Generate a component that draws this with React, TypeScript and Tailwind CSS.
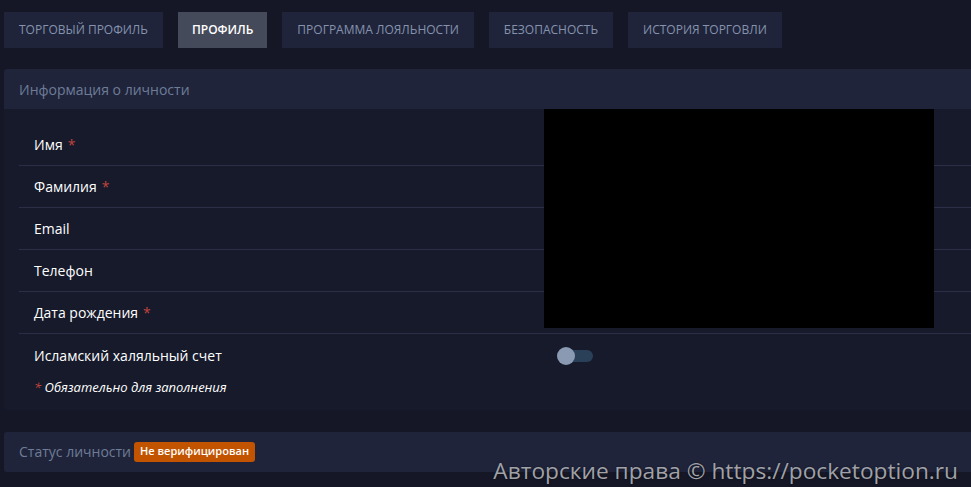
import { useState } from 'react'

const tabs = ['Торговый профиль', 'Профиль', 'Программа лояльности', 'Безопасность', 'История торговли']

const fields = [
  { label: 'Имя', required: true },
  { label: 'Фамилия', required: true },
  { label: 'Email', required: false },
  { label: 'Телефон', required: false },
  { label: 'Дата рождения', required: true },
]

export default function App() {
  const [active, setActive] = useState(1)
  const [halal, setHalal] = useState(false)

  return (
    <div
      className="relative min-h-[487px] bg-[#151726] overflow-hidden pl-1 pt-3"
      style={{ fontFamily: '"Open Sans", "Noto Sans", sans-serif' }}
    >
      {/* вкладки */}
      <div className="flex gap-[15px]">
        {tabs.map((t, i) => (
          <button
            key={t}
            onClick={() => setActive(i)}
            className={`h-9 text-[12px] uppercase ${
              i === active ? 'px-[14px] bg-[#454a5a] text-white font-semibold' : 'px-[15px] bg-[#1f243b] text-[#8593ad]'
            }`}
          >
            {t}
          </button>
        ))}
      </div>

      {/* Информация о личности */}
      <div className="relative mt-[21px] -mr-2 rounded-[3px] bg-[#161a2a] overflow-hidden">
        <div className="h-10 bg-[#1f243b] flex items-center px-[15px] text-[14px] text-[#6e7d97]">
          Информация о личности
        </div>
        <div className="pl-[15px] pt-[15px] pb-[12px]">
          {fields.map((f) => (
            <div key={f.label} className="h-[42px] border-b border-[#2a2e47] flex items-center pl-[15px] text-[14px] text-white">
              {f.label}
              {f.required && <span className="text-[#c0443f] ml-[5px]">*</span>}
            </div>
          ))}
          <div className="h-[43px] flex items-center pl-[15px] text-[14px] text-white">
            <div className="w-[523px]">Исламский халяльный счет</div>
            <button onClick={() => setHalal(!halal)} className="relative w-9 h-[18px] flex items-center">
              <span className={`absolute left-2 right-0 h-3 rounded-full ${halal ? 'bg-[#2f6f9f]' : 'bg-[#2a4058]'}`} />
              <span className={`absolute w-[18px] h-[18px] rounded-full bg-[#8a9ab3] ${halal ? 'left-[18px]' : 'left-0'}`} />
            </button>
          </div>
          <div className="pl-[15px] mt-[1px] text-[13px] italic text-white">
            <span className="text-[#c0443f]">*</span> Обязательно для заполнения
          </div>
        </div>
        {/* скрыто */}
        <div className="absolute left-[540px] top-10 w-[390px] h-[219px] bg-black" />
      </div>

      {/* Статус личности */}
      <div className="mt-[22px] -mr-2 h-10 rounded-[3px] bg-[#1f243b] flex items-center px-[15px] text-[14px] text-[#6e7d97]">
        Статус личности
        <span className="ml-[3px] h-5 px-[6px] flex items-center rounded-[3px] bg-[#c25400] text-white text-[11px] font-semibold">
          Не верифицирован
        </span>
      </div>

      <div className="absolute right-[13px] top-[454px] text-[22.7px] text-[#a0a2a8] [text-shadow:0_0_2px_rgba(0,0,0,0.6)]">
        Авторские права © https://pocketoption.ru
      </div>
    </div>
  )
}
